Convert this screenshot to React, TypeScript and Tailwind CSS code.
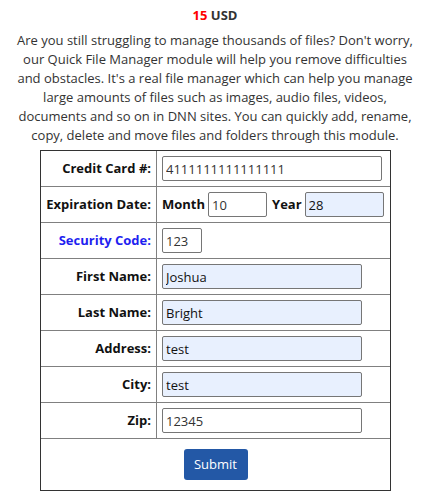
import React from "react";

// ---- local components ------------------------------------------------------

function Row({
  label,
  blue,
  tight,
  children,
}: {
  label: string;
  blue?: boolean;
  tight?: boolean;
  children: React.ReactNode;
}) {
  return (
    <div className="grid grid-cols-[116px_1fr] border-b border-[#808080]">
      <div
        className={`flex h-[35px] items-center justify-end whitespace-nowrap border-r border-[#808080] pr-[5px] font-bold ${
          blue ? "text-[#1f1ff0]" : "text-[#111]"
        }`}
      >
        {label}
      </div>
      <div
        className={`flex h-[35px] items-center pl-[5px] ${tight ? "gap-[3px]" : "gap-[4px]"}`}
      >
        {children}
      </div>
    </div>
  );
}

function Field({
  value,
  width,
  filled,
}: {
  value: string;
  width: string;
  filled?: boolean;
}) {
  return (
    <input
      readOnly
      value={value}
      className={`h-[25px] ${width} rounded-[2px] border border-[#767676] px-[3px] text-[13px] outline-none ${
        filled ? "bg-[#e8f0fe] text-[#111]" : "bg-white text-[#333]"
      }`}
      style={{ fontFamily: "'Open Sans', sans-serif" }}
    />
  );
}

// ---- page ------------------------------------------------------------------

export default function App() {
  return (
    <div
      className="w-[430px] bg-white pt-[6px] text-[13px] leading-[19px] text-[#333]"
      style={{ fontFamily: "'Open Sans', sans-serif" }}
    >
      <p className="text-center font-bold">
        <span className="text-[#ff0000]">15</span> USD
      </p>
      <p className="mx-auto mt-[6px] w-[405px] text-center">
        Are you still struggling to manage thousands of files? Don't worry, our Quick File
        Manager module will help you remove difficulties and obstacles. It's a real file
        manager which can help you manage large amounts of files such as images, audio files,
        videos, documents and so on in DNN sites. You can quickly add, rename, copy, delete
        and move files and folders through this module.
      </p>

      <div className="mt-[5px] ml-[40px] w-[351px] border border-[#333]">
        <Row label="Credit Card #:">
          <Field value="4111111111111111" width="w-[220px]" />
        </Row>
        <Row label="Expiration Date:" tight>
          <span className="font-bold text-[#111]">Month</span>
          <Field value="10" width="w-[59px]" />
          <span className="ml-[2px] font-bold text-[#111]">Year</span>
          <Field value="28" width="w-[79px]" filled />
        </Row>
        <Row label="Security Code:" blue>
          <Field value="123" width="w-[40px]" />
        </Row>
        <Row label="First Name:">
          <Field value="Joshua" width="w-[200px]" filled />
        </Row>
        <Row label="Last Name:">
          <Field value="Bright" width="w-[200px]" filled />
        </Row>
        <Row label="Address:">
          <Field value="test" width="w-[200px]" filled />
        </Row>
        <Row label="City:">
          <Field value="test" width="w-[200px]" filled />
        </Row>
        <Row label="Zip:">
          <Field value="12345" width="w-[200px]" />
        </Row>
        <div className="flex h-[51px] items-center justify-center">
          <button className="h-[31px] w-[64px] rounded-[3px] bg-[#2358a6] text-[13px] text-white">
            Submit
          </button>
        </div>
      </div>
    </div>
  );
}
